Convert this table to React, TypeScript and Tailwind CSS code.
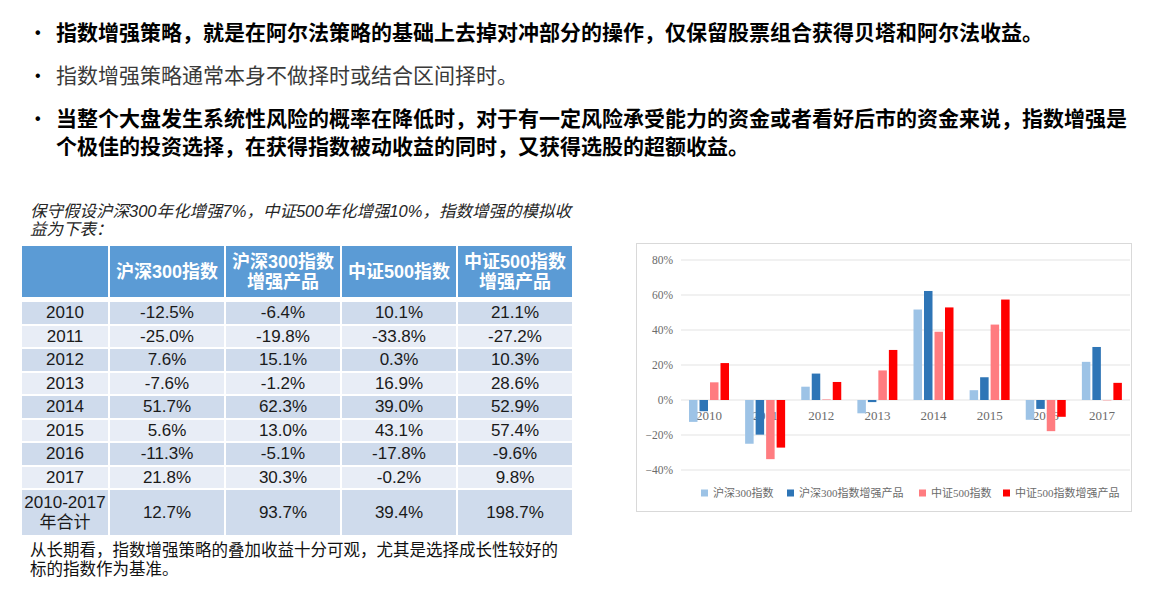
import React from 'react';

const rows: [string, string, string, string, string][] = [
  ['2010', '-12.5%', '-6.4%', '10.1%', '21.1%'],
  ['2011', '-25.0%', '-19.8%', '-33.8%', '-27.2%'],
  ['2012', '7.6%', '15.1%', '0.3%', '10.3%'],
  ['2013', '-7.6%', '-1.2%', '16.9%', '28.6%'],
  ['2014', '51.7%', '62.3%', '39.0%', '52.9%'],
  ['2015', '5.6%', '13.0%', '43.1%', '57.4%'],
  ['2016', '-11.3%', '-5.1%', '-17.8%', '-9.6%'],
  ['2017', '21.8%', '30.3%', '-0.2%', '9.8%'],
];

const colors = ['#9dc3e6', '#2e75b6', '#ff7c80', '#ff0000'];
const legend = ['沪深300指数', '沪深300指数增强产品', '中证500指数', '中证500指数增强产品'];

function Chart() {
  // plot area in local coords
  const x0 = 44;
  const x1 = 493;
  const zeroY = 156;
  const k = 1.75;
  const gw = (x1 - x0) / 8;
  const ticks = [80, 60, 40, 20, 0, -20, -40];
  const legendX = [64, 150, 282, 366];

  return (
    <svg width="496" height="269" viewBox="0 0 496 269">
      {ticks.map((t) => {
        const y = zeroY - t * k;
        return (
          <g key={t}>
            <line x1={x0} x2={x1} y1={y} y2={y} stroke="#e3e3e3" strokeWidth="1" />
            <text
              x="36"
              y={y + 4}
              textAnchor="end"
              fontSize="11.5"
              fill="#6b6b6b"
              fontFamily="'Liberation Serif', serif"
            >
              {t < 0 ? '\u2212' + Math.abs(t) + '%' : t + '%'}
            </text>
          </g>
        );
      })}
      {rows.map((r, i) => (
        <text
          key={r[0]}
          x={x0 + gw * i + gw / 2}
          y="176"
          textAnchor="middle"
          fontSize="13"
          fill="#6b6b6b"
          fontFamily="'Liberation Serif', serif"
        >
          {r[0]}
        </text>
      ))}
      {rows.map((r, i) =>
        r.slice(1).map((v, j) => {
          const val = parseFloat(v);
          const h = Math.abs(val) * k;
          const x = x0 + gw * i + 8 + j * 10.5;
          const y = val >= 0 ? zeroY - h : zeroY;
          return <rect key={i + '-' + j} x={x} y={y} width="8.5" height={h} fill={colors[j]} />;
        }),
      )}
      {legend.map((l, i) => (
        <g key={l}>
          <rect x={legendX[i]} y="245.5" width="7" height="7" fill={colors[i]} />
          <text
            x={legendX[i] + 12}
            y="253"
            fontSize="11"
            fill="#6b6b6b"
            fontFamily="'Liberation Serif', 'Noto Sans CJK SC', serif"
          >
            {l}
          </text>
        </g>
      ))}
    </svg>
  );
}

export default function App() {
  return (
    <div className="w-[1168px] h-[592px] bg-white overflow-hidden font-[family-name:'Liberation_Sans','Noto_Sans_CJK_SC',sans-serif] text-black">
      {/* bullets */}
      <ul className="pt-[19px] pl-[35px] flex flex-col gap-[15px] text-[21px] leading-[28px]">
        <li className="flex font-bold">
          <span className="w-[21px] shrink-0 text-[16px]">•</span>
          <span>指数增强策略，就是在阿尔法策略的基础上去掉对冲部分的操作，仅保留股票组合获得贝塔和阿尔法收益。</span>
        </li>
        <li className="flex text-[#3a3a3a]">
          <span className="w-[21px] shrink-0 text-[16px] text-black">•</span>
          <span>指数增强策略通常本身不做择时或结合区间择时。</span>
        </li>
        <li className="flex font-bold">
          <span className="w-[21px] shrink-0 text-[16px]">•</span>
          <span className="w-[1080px]">
            当整个大盘发生系统性风险的概率在降低时，对于有一定风险承受能力的资金或者看好后市的资金来说，指数增强是个极佳的投资选择，在获得指数被动收益的同时，又获得选股的超额收益。
          </span>
        </li>
      </ul>

      <div className="flex mt-[41px]">
        {/* table side */}
        <div className="ml-[22px] w-[551px] flex flex-col">
          <p className="ml-[8px] w-[550px] italic text-[16.5px] leading-[18px] text-[#262626]">
            保守假设沪深300年化增强7%，中证500年化增强10%，指数增强的模拟收益为下表：
          </p>
          <div className="mt-[8px] grid grid-cols-[86px_114px_114px_114px_114px] gap-[2px]">
            <div className="h-[51px] bg-[#5b9bd5]" />
            {['沪深300指数', '沪深300指数增强产品', '中证500指数', '中证500指数增强产品'].map((h) => (
              <div
                key={h}
                className="h-[51px] bg-[#5b9bd5] flex items-center justify-center text-center text-white font-bold text-[18px] leading-[20px] px-[4px]"
              >
                {h === '沪深300指数增强产品' ? (
                  <span>
                    沪深300指数
                    <br />
                    增强产品
                  </span>
                ) : h === '中证500指数增强产品' ? (
                  <span>
                    中证500指数
                    <br />
                    增强产品
                  </span>
                ) : (
                  h
                )}
              </div>
            ))}
            <div className="col-span-5 h-[1px]" />
            {rows.map((r, i) =>
              r.map((c, j) => (
                <div
                  key={r[0] + j}
                  className={
                    'h-[21.5px] flex items-center justify-center text-[17px] leading-none text-[#1a1a1a] ' +
                    (i % 2 === 0 ? 'bg-[#cfdbec]' : 'bg-[#e8edf6]')
                  }
                >
                  {c}
                </div>
              )),
            )}
            <div className="h-[45px] bg-[#cfdbec] flex items-center justify-center text-center text-[17px] leading-[20px] text-[#1a1a1a]">
              <span>
                2010-2017
                <br />
                年合计
              </span>
            </div>
            {['12.7%', '93.7%', '39.4%', '198.7%'].map((t) => (
              <div key={t} className="h-[45px] bg-[#cfdbec] flex items-center justify-center text-[17px] text-[#1a1a1a]">
                {t}
              </div>
            ))}
          </div>
          <p className="mt-[6px] ml-[8px] w-[535px] text-[16.5px] leading-[19px] text-[#111]">
            从长期看，指数增强策略的叠加收益十分可观，尤其是选择成长性较好的标的指数作为基准。
          </p>
        </div>

        {/* chart side */}
        <div className="ml-[63px] mt-[41px] h-[269px] w-[496px] border border-[#d9d9d9] bg-white">
          <Chart />
        </div>
      </div>
    </div>
  );
}
